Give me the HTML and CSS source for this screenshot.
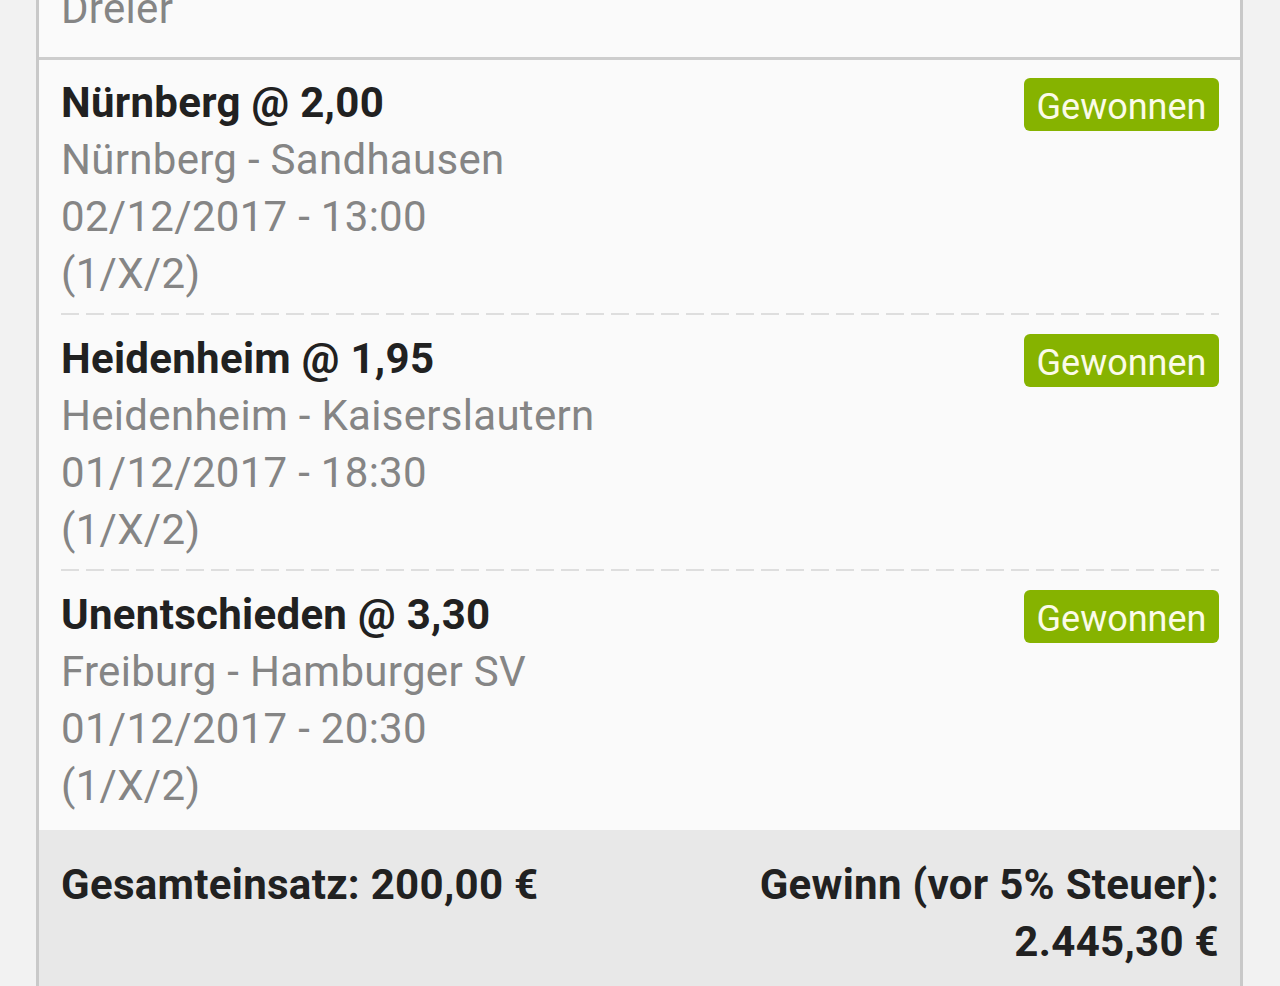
FILE: index.html
```html
<!DOCTYPE html>
<html lang="de">

<head>
    <meta charset="UTF-8" />
    <meta name="viewport" content="width=device-width, initial-scale=1.0" />
    <title>Wettschein</title>
    <link rel="stylesheet" href="styles.css">
</head>

<body>
    <main class="ticket">
        <div class="ticket-head">Dreier</div>
        <div class="bets">
            <div class="bet">
                <div class="bet-info">
                    <h2>Nürnberg @ 2,00</h2>
                    <p>Nürnberg - Sandhausen</p>
                    <p>02/12/2017 - 13:00</p>
                    <p>(1/X/2)</p>
                </div>
                <span class="status">Gewonnen</span>
            </div>
            <div class="bet">
                <div class="bet-info">
                    <h2>Heidenheim @ 1,95</h2>
                    <p>Heidenheim - Kaiserslautern</p>
                    <p>01/12/2017 - 18:30</p>
                    <p>(1/X/2)</p>
                </div>
                <span class="status">Gewonnen</span>
            </div>
            <div class="bet">
                <div class="bet-info">
                    <h2>Unentschieden @ 3,30</h2>
                    <p>Freiburg - Hamburger SV</p>
                    <p>01/12/2017 - 20:30</p>
                    <p>(1/X/2)</p>
                </div>
                <span class="status">Gewonnen</span>
            </div>
        </div>
        <div class="summary">
            <div class="stake">Gesamteinsatz: 200,00 €</div>
            <div class="payout">Gewinn (vor 5% Steuer):<br>2.445,30 €</div>
        </div>
    </main>
</body>

</html>
```

FILE: styles.css
```css
* {
    padding: 0;
    margin: 0;
    box-sizing: border-box;
}

body {
    font-family: Roboto, "Noto Sans", sans-serif;
    font-size: 42px;
    line-height: 57px;
    letter-spacing: 0.3px;
    background-color: #f2f2f2;
    color: #212121;
}

.ticket {
    width: 1207px;
    margin: -20px 0 0 36px;
    background-color: #fafafa;
    border-left: 3px solid #c9c9c9;
    border-right: 3px solid #c9c9c9;
}

.ticket-head {
    color: #858585;
    padding: 0 22px 20px;
    border-bottom: 3px solid #cdcdcd;
}

.bets {
    padding: 0 21px 0 22px;
}

.bet {
    display: flex;
    justify-content: space-between;
    align-items: flex-start;
    padding: 14px 0 11px;
}

.bet + .bet {
    padding-top: 17px;
    background: repeating-linear-gradient(to right, #dedede 0 18px, transparent 18px 25px) top left / 100% 2px no-repeat;
}

.bet:last-child {
    padding-bottom: 16px;
}

.bet-info h2 {
    font-size: 42px;
    font-weight: 700;
}

.bet-info p {
    color: #858585;
}

.status {
    margin-top: 4px;
    width: 195px;
    height: 53px;
    line-height: 58px;
    text-align: center;
    font-size: 36px;
    letter-spacing: 0;
    color: #fbfbe8;
    background-color: #86b300;
    border-radius: 6px;
}

.summary {
    display: flex;
    justify-content: space-between;
    align-items: flex-start;
    padding: 26px 21px 40px 22px;
    background-color: #e8e8e8;
    font-weight: 700;
}

.payout {
    text-align: right;
}
```
